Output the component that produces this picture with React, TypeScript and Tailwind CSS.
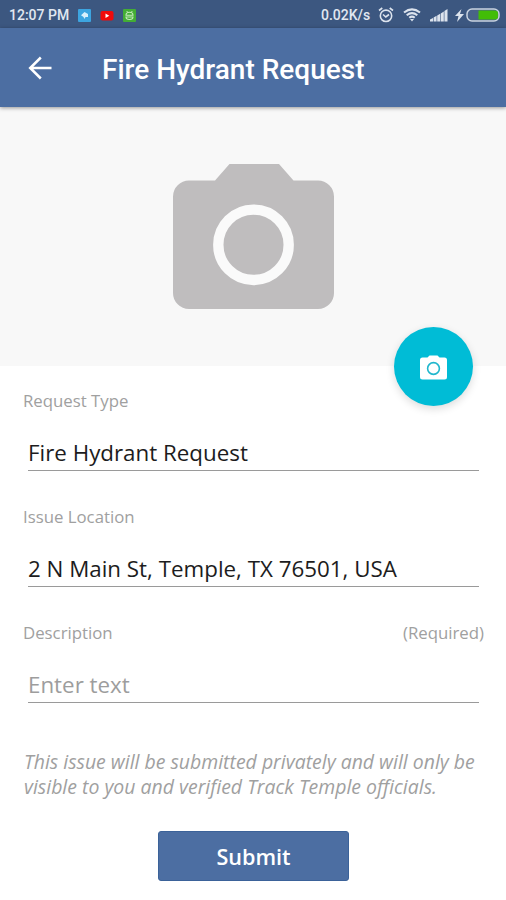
import clsx from 'clsx';

interface FieldProps {
  label: string;
  value: string;
  note?: string;
  placeholder?: boolean;
}

function StatusBar() {
  return (
    <div className="flex h-7 items-center justify-between bg-[#3c5780] pt-0.5 pr-1.5 pl-[9px] font-['Roboto',sans-serif] text-[14px] font-medium text-[#e1e7f1]">
      <div className="flex items-center">
        <span className="w-[60px] whitespace-nowrap">12:07 PM</span>
        <svg className="ml-[9px]" width="13" height="13" viewBox="0 0 13 13">
          <rect width="13" height="13" rx="1" fill="#3da5e0" />
          <path d="M3 6.200 6.500 3 10 5v3L7.500 8 6.500 10 5.500 8z" fill="#d9f0fc" />
        </svg>
        <svg className="ml-[9px]" width="14" height="13" viewBox="0 0 14 13">
          <rect x="0.500" y="2" width="13" height="9.500" rx="2" fill="#f00a0a" />
          <path d="M5.500 4.500v4.400l3.800-2.200z" fill="#fff" />
        </svg>
        <svg className="ml-[9px]" width="13" height="13" viewBox="0 0 13 13" fill="none" stroke="#c5eabb">
          <rect width="13" height="13" rx="1" fill="#43ad35" stroke="none" />
          <path d="M3 6.200a3.500 3 0 0 1 7 0zM3 8a3.500 2.500 0 0 0 7 0z" strokeWidth="1.100" />
          <path d="m3.800 2 .8 1.500M9.200 2l-.8 1.500" />
        </svg>
      </div>

      <div className="flex items-center">
        <span className="w-[50px] whitespace-nowrap">0.02K/s</span>
        <svg className="ml-[7px]" width="16" height="16" viewBox="0 0 16 16" fill="none" stroke="#dce3ed" strokeWidth="1.600">
          <circle cx="8" cy="8.800" r="5.700" />
          <path d="M1 3.500 4.300 1M15 3.500 11.700 1M5 7.500l2.800 2.500L11 7.500" />
        </svg>
        <svg className="ml-[9px]" width="18" height="14" viewBox="0 0 18 14" fill="none" stroke="#dce3ed" strokeWidth="2.100">
          <path d="M1 4.500Q9-1.800 17 4.500M3.700 7.200Q9 3 14.300 7.200M6.300 9.800Q9 7.600 11.700 9.800" />
          <path d="m7 11 2 2.500 2-2.500z" fill="#dce3ed" stroke="none" />
        </svg>
        <svg className="ml-[9px]" width="18" height="13" viewBox="0 0 18 13" fill="#dce3ed">
          <path d="M0 12.500V10.500l3-1.500v3.500zM3.600 12.500V8.500l3-1.700v5.700zM7.200 12.500V6.500l3-1.700v7.700zM10.800 12.500V4.500l3-1.900v9.900zM14.400 12.500V2L17.500 0v12.500z" />
        </svg>
        <svg className="ml-[7px]" width="9" height="13" viewBox="0 0 9 13" fill="#dce3ed">
          <path d="M6.500 0 0 7h3.500L2 13l7-8H5z" />
        </svg>
        <svg className="ml-0.5" width="34" height="14" viewBox="0 0 34 14">
          <rect x="1" y="1" width="32" height="12" rx="5" fill="#49628a" stroke="#c9d3e0" strokeWidth="1.500" />
          <path d="M12.500 2.500H29a3 3 0 0 1 3 3v3a3 3 0 0 1-3 3H12.500z" fill="#42bd08" />
        </svg>
      </div>
    </div>
  );
}

function Header() {
  return (
    <header className="relative z-10 flex h-[79px] items-center bg-[#4c6ea2] pl-7 shadow-[0_1px_4px_rgba(0,0,0,0.4)]">
      <svg width="24" height="24" viewBox="0 0 24 24" fill="none" stroke="#fff" strokeWidth="2.500">
        <path d="M12.800 1.500 2.200 12l10.600 10.500M2.500 12h21" />
      </svg>
      <h1 className="ml-[50px] pt-1 font-['Roboto',sans-serif] text-[28px] font-medium whitespace-nowrap text-white">
        Fire Hydrant Request
      </h1>
    </header>
  );
}

function PhotoArea() {
  return (
    <div className="relative flex h-[259px] justify-center bg-[#f8f8f8] pt-[57px]">
      <svg width="161" height="145" viewBox="0 0 161 145">
        <path
          d="M16 16.500H42L56.500 0H106l14.500 16.500H145a16 16 0 0 1 16 16V129a16 16 0 0 1-16 16H16a16 16 0 0 1-16-16V32.500a16 16 0 0 1 16-16z"
          fill="#bfbdbe"
        />
        <circle cx="80.500" cy="80.800" r="35.200" fill="none" stroke="#fafafa" strokeWidth="10.400" />
      </svg>
      <button className="absolute right-[33px] -bottom-10 flex size-[79px] items-center justify-center rounded-full bg-[#00bcd6] shadow-[0_3px_9px_rgba(0,0,0,0.14)]">
        <svg className="mt-0.5" width="27" height="25" viewBox="0 0 27 25">
          <path
            d="M2.500 2.500H7.500L9.500.5H17.500L19.500 2.500H24.500A2.500 2.500 0 0 1 27 5V22A2.500 2.500 0 0 1 24.500 24.500H2.500A2.500 2.500 0 0 1 0 22V5A2.500 2.500 0 0 1 2.500 2.500z"
            fill="#fff"
          />
          <circle cx="13.500" cy="13.500" r="5.900" fill="none" stroke="#20b7cd" strokeWidth="1.600" />
        </svg>
      </button>
    </div>
  );
}

function Field({ label, value, note, placeholder }: FieldProps) {
  return (
    <div className="h-[116px]">
      <div className="flex justify-between pr-[22px] pl-[23px] text-[16.8px] leading-6 text-[#a0a0a0]">
        <span>{label}</span>
        {note && <span>{note}</span>}
      </div>
      <div
        className={clsx(
          'mr-[27px] ml-7 h-[58px] border-b-[1.500px] border-[#9a9a9a] pt-[25px] text-[22.35px] leading-[30px] whitespace-nowrap',
          placeholder ? 'text-[#9d9d9d]' : 'text-[#1c1c20]'
        )}
      >
        {value}
      </div>
    </div>
  );
}

export default function App() {
  return (
    <div className="h-[900px] w-[506px] overflow-hidden bg-white font-['Open_Sans',sans-serif]">
      <StatusBar />
      <Header />
      <PhotoArea />

      <main className="pt-[23px]">
        <Field label="Request Type" value="Fire Hydrant Request" />
        <Field label="Issue Location" value="2 N Main St, Temple, TX 76501, USA" />
        <Field label="Description" value="Enter text" note="(Required)" placeholder />

        <p className="pt-3 pl-6 text-[19.45px] leading-[25px] whitespace-nowrap text-[#a0a0a0] italic">
          This issue will be submitted privately and will only be
          <br />
          visible to you and verified Track Temple officials.
        </p>

        <button className="mx-auto mt-8 flex h-[50px] w-[191px] items-center justify-center rounded-[3px] border border-[#3b6299] bg-[#4c6ea2] pt-0.5 pl-px text-[21.6px] font-semibold text-white">
          Submit
        </button>
      </main>
    </div>
  );
}
